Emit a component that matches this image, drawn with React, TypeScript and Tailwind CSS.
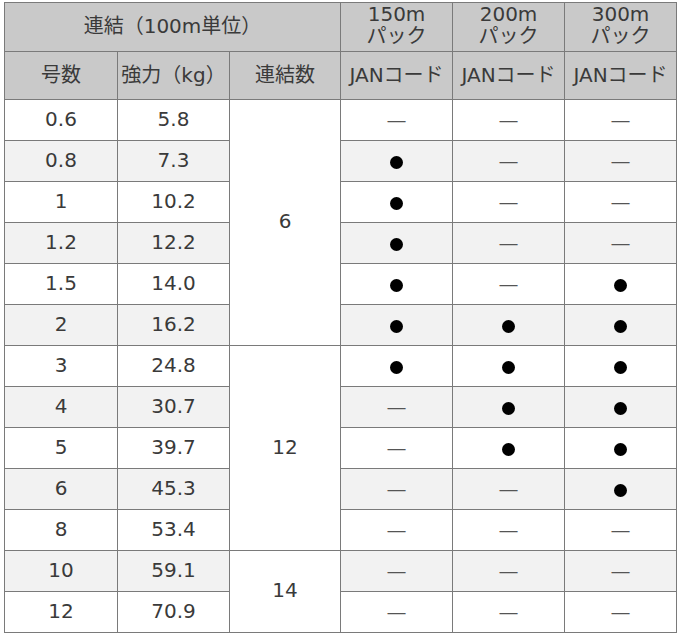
import React from "react";

type Mark = "o" | "-";

const rows: { size: string; strength: string; packs: Mark[] }[] = [
  { size: "0.6", strength: "5.8", packs: ["-", "-", "-"] },
  { size: "0.8", strength: "7.3", packs: ["o", "-", "-"] },
  { size: "1", strength: "10.2", packs: ["o", "-", "-"] },
  { size: "1.2", strength: "12.2", packs: ["o", "-", "-"] },
  { size: "1.5", strength: "14.0", packs: ["o", "-", "o"] },
  { size: "2", strength: "16.2", packs: ["o", "o", "o"] },
  { size: "3", strength: "24.8", packs: ["o", "o", "o"] },
  { size: "4", strength: "30.7", packs: ["-", "o", "o"] },
  { size: "5", strength: "39.7", packs: ["-", "o", "o"] },
  { size: "6", strength: "45.3", packs: ["-", "-", "o"] },
  { size: "8", strength: "53.4", packs: ["-", "-", "-"] },
  { size: "10", strength: "59.1", packs: ["-", "-", "-"] },
  { size: "12", strength: "70.9", packs: ["-", "-", "-"] },
];

// first row index of each 連結数 group -> [value, rows spanned]
const groups: Record<number, [string, number]> = {
  0: ["6", 6],
  6: ["12", 5],
  11: ["14", 2],
};

const cell = "border border-[#7a7a7a] text-center align-middle p-0";

function MarkCell({ mark, bg }: { mark: Mark; bg: string }) {
  return (
    <td className={`${cell} ${bg}`}>
      {mark === "o" ? (
        <span className="inline-block h-[13px] w-[13px] translate-y-[1px] rounded-full bg-black" aria-label="●" />
      ) : (
        <span className="text-[#555]">—</span>
      )}
    </td>
  );
}

export default function App() {
  return (
    <div className="min-h-screen bg-white pl-[4px] pt-[2px]">
      <table
        className="table-fixed border-collapse text-[20px] leading-[22px] text-[#3a3a3a]"
        style={{ width: 672, fontFamily: '"DejaVu Sans", "Noto Sans CJK JP", sans-serif' }}
      >
        <colgroup>
          <col className="w-[113px]" />
          <col className="w-[112px]" />
          <col className="w-[111px]" />
          <col className="w-[112px]" />
          <col className="w-[112px]" />
          <col className="w-[112px]" />
        </colgroup>
        <thead>
          <tr className="h-[49px] bg-[#c9c9c9]">
            <th colSpan={3} className={`${cell} pb-[2px] font-normal`}>
              連結（100m単位）
            </th>
            <th className={`${cell} pb-[4px] font-normal`}>
              150m
              <br />
              パック
            </th>
            <th className={`${cell} pb-[4px] font-normal`}>
              200m
              <br />
              パック
            </th>
            <th className={`${cell} pb-[4px] font-normal`}>
              300m
              <br />
              パック
            </th>
          </tr>
          <tr className="h-[48px] bg-[#c9c9c9]">
            <th className={`${cell} pb-[2px] font-normal`}>号数</th>
            <th className={`${cell} pb-[2px] font-normal`}>強力（kg）</th>
            <th className={`${cell} pb-[2px] font-normal`}>連結数</th>
            <th className={`${cell} pb-[2px] font-normal`}>JANコード</th>
            <th className={`${cell} pb-[2px] font-normal`}>JANコード</th>
            <th className={`${cell} pb-[2px] font-normal`}>JANコード</th>
          </tr>
        </thead>
        <tbody>
          {rows.map((r, i) => {
            const bg = i % 2 === 1 ? "bg-[#f2f2f2]" : "bg-white";
            const g = groups[i];
            return (
              <tr key={r.size} className="h-[41px]">
                <td className={`${cell} pb-[3px] ${bg}`}>{r.size}</td>
                <td className={`${cell} pb-[3px] ${bg}`}>{r.strength}</td>
                {g && (
                  <td rowSpan={g[1]} className={`${cell} pb-[3px] bg-white`}>
                    {g[0]}
                  </td>
                )}
                {r.packs.map((m, j) => (
                  <MarkCell key={j} mark={m} bg={bg} />
                ))}
              </tr>
            );
          })}
        </tbody>
      </table>
    </div>
  );
}
